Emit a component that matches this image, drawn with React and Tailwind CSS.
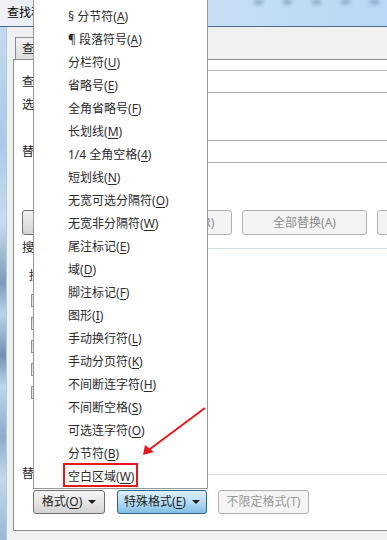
import React from 'react'

const specials = [
    ['§ 分节符', 'A'],
    ['¶ 段落符号', 'A'],
    ['分栏符', 'U'],
    ['省略号', 'E'],
    ['全角省略号', 'F'],
    ['长划线', 'M'],
    ['1/4 全角空格', '4'],
    ['短划线', 'N'],
    ['无宽可选分隔符', 'O'],
    ['无宽非分隔符', 'W'],
    ['尾注标记', 'E'],
    ['域', 'D'],
    ['脚注标记', 'F'],
    ['图形', 'I'],
    ['手动换行符', 'L'],
    ['手动分页符', 'K'],
    ['不间断连字符', 'H'],
    ['不间断空格', 'S'],
    ['可选连字符', 'O'],
    ['分节符', 'B'],
    ['空白区域', 'W'],
]

function Label({ text, k }) {
    return (
        <span className="whitespace-pre">
            {text}(<span className="underline underline-offset-2">{k}</span>)
        </span>
    )
}

function Caret() {
    return <span className="ml-[6px] inline-block border-x-[4px] border-t-[4px] border-x-transparent border-t-[#1a1a1a]"></span>
}

function App() {
    return (
        <div className="relative w-[387px] h-[540px] overflow-hidden bg-[#f0f0f0] font-['Noto_Sans','Noto_Sans_CJK_SC',sans-serif] text-[12px] text-[#1e1e1e]">
            {/* title bar */}
            <div className="flex h-[27px] items-center border-b border-[#4f6a86] bg-gradient-to-r from-[#eef2f7] via-[#c9e0f5] to-[#b8d8f5] pl-[7px]">
                <span className="text-black">查找和替换</span>
                <div className="ml-auto mr-[8px] flex gap-[20px] self-start">
                    <span className="h-[4px] w-[9px] rounded-full bg-[#7d9ab8] blur-[2px]"></span>
                    <span className="h-[4px] w-[9px] rounded-full bg-[#7d9ab8] blur-[2px]"></span>
                    <span className="h-[4px] w-[9px] rounded-full bg-[#7d9ab8] blur-[2px]"></span>
                    <span className="h-[4px] w-[9px] rounded-full bg-[#7d9ab8] blur-[2px]"></span>
                    <span className="h-[4px] w-[9px] rounded-full bg-[#7d9ab8] blur-[2px]"></span>
                </div>
            </div>

            <div className="flex h-[513px]">
                {/* window frame */}
                <div className="w-[6px] shrink-0 bg-[linear-gradient(to_bottom,#c3dbf1_0%,#abc8e6_22%,#c6ddf2_38%,#7f9bb8_50%,#b9d3ec_56%,#7591ae_64%,#bcd5ee_70%,#8fabc8_80%,#c1d9f0_88%,#9ab6d2_100%)]"></div>

                {/* client area */}
                <div className="flex w-[480px] shrink-0 flex-col border-l border-[#b9c8d8] pl-[6px]">
                    <div className="flex h-[32px] items-end pl-[2px]">
                        <div className="flex h-[22px] w-[60px] items-center border border-b-0 border-[#898c95] bg-gradient-to-b from-[#f2f2f2] to-[#dbdbdb] pl-[6px]">
                            <Label text="查找" k="D" />
                        </div>
                        <div className="h-[24px] w-[62px] border border-b-0 border-[#898c95] bg-white"></div>
                        <div className="h-[22px] w-[60px] border border-b-0 border-[#898c95] bg-gradient-to-b from-[#f2f2f2] to-[#dbdbdb]"></div>
                    </div>

                    <div className="flex h-[472px] flex-col border border-[#898c95] bg-white pl-[8px]">
                        <div className="mt-[10px] flex h-[23px] items-center">
                            <span className="w-[80px] shrink-0"><Label text="查找内容" k="N" />:</span>
                            <div className="h-[23px] flex-1 border border-[#abadb3] bg-white"></div>
                        </div>
                        <div className="mt-[4px] flex h-[16px] items-center">
                            <span className="w-[80px] shrink-0">选项:</span>
                        </div>
                        <div className="mt-[27px] flex h-[23px] items-center">
                            <span className="w-[80px] shrink-0"><Label text="替换为" k="I" />:</span>
                            <div className="h-[23px] flex-1 border border-[#abadb3] bg-white"></div>
                        </div>

                        <div className="mt-[47px] flex h-[25px] items-stretch">
                            <div className="w-[90px] shrink-0 rounded-[3px] border border-[#707070] bg-gradient-to-b from-[#f2f2f2] to-[#d4d4d4]"></div>
                            <div className="ml-[46px] flex w-[74px] shrink-0 items-center justify-center rounded-[3px] border border-[#adb2b5] bg-[#f4f4f4] text-[#8d8d8d]">
                                替换(R)
                            </div>
                            <div className="ml-[10px] flex w-[125px] shrink-0 items-center justify-center rounded-[3px] border border-[#adb2b5] bg-[#f4f4f4] text-[#8d8d8d]">
                                全部替换(A)
                            </div>
                            <div className="ml-[10px] flex w-[100px] shrink-0 items-center justify-center rounded-[3px] border border-[#adb2b5] bg-[#f4f4f4] text-[#8d8d8d]">
                                查找下一处(F)
                            </div>
                        </div>

                        <div className="mt-[5px] flex h-[16px] items-center gap-[6px]">
                            <span>搜索选项</span>
                            <div className="h-px flex-1 bg-[#d5dfe5]"></div>
                        </div>
                        <div className="mt-[12px] flex h-[16px] items-center pl-[7px]">
                            <span>搜索:</span>
                        </div>
                        <div className="mt-[5px] flex flex-col pl-[9px]">
                            {[0, 1, 2, 3, 4].map((i) => (
                                <div key={i} className="flex h-[23px] items-center">
                                    <span className="h-[13px] w-[13px] border border-[#8e8f8f] bg-gradient-to-br from-[#dcdcdc] to-[#fbfbfb]"></span>
                                </div>
                            ))}
                        </div>

                        <div className="mt-[62px] flex h-[16px] items-center gap-[6px]">
                            <span>替换</span>
                            <div className="h-px flex-1 bg-[#d5dfe5]"></div>
                        </div>
                        <div className="mt-[8px] ml-[11px] flex h-[24px] items-stretch">
                            <div className="flex w-[72px] shrink-0 items-center justify-center rounded-[3px] border border-[#707070] bg-gradient-to-b from-[#f4f4f4] via-[#e6e6e6] to-[#d2d2d2]">
                                <Label text="格式" k="O" />
                                <Caret />
                            </div>
                            <div className="ml-[12px] flex w-[90px] shrink-0 items-center justify-center rounded-[3px] border border-[#2c628b] bg-gradient-to-b from-[#dcf0fb] via-[#b6dcf3] to-[#7fbde4]">
                                <Label text="特殊格式" k="E" />
                                <Caret />
                            </div>
                            <div className="ml-[11px] flex w-[91px] shrink-0 items-center justify-center rounded-[3px] border border-[#adb2b5] bg-[#f4f4f4] text-[#9a9a9a]">
                                不限定格式(T)
                            </div>
                        </div>
                    </div>
                </div>
            </div>

            {/* special characters menu */}
            <div className="absolute left-[33px] top-0 flex h-[489px] w-[175px] flex-col border border-t-0 border-[#979797] bg-white pt-[5px] pl-[34px] text-[#2b2b2b]">
                {specials.map(([text, k], i) => (
                    <div key={i} className="flex h-[23px] shrink-0 items-center">
                        <Label text={text} k={k} />
                    </div>
                ))}
            </div>

            {/* annotation */}
            <div className="absolute left-[63px] top-[463px] h-[24px] w-[75px] border-2 border-[#e8151b]"></div>
            <svg className="pointer-events-none absolute left-0 top-0" width="387" height="540">
                <line x1="205" y1="408" x2="150" y2="449" stroke="#e8151b" strokeWidth="2" />
                <polygon points="143,455 145,445 154,452" fill="#e8151b" />
            </svg>
        </div>
    )
}

export default App
